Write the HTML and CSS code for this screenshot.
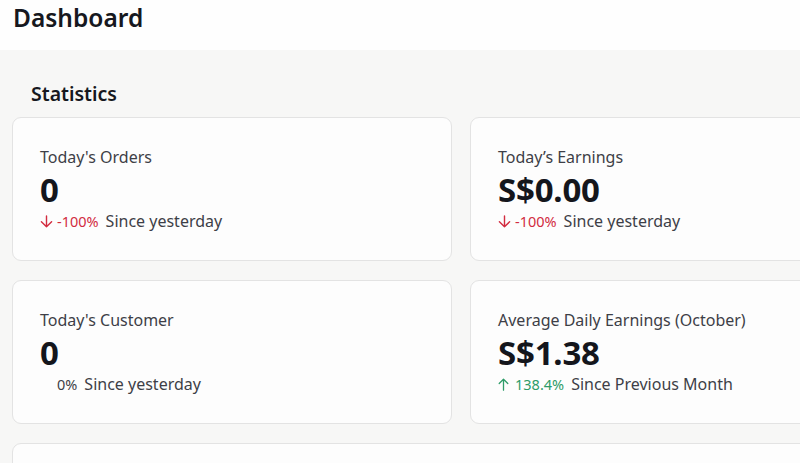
FILE: index.html
```html
<!DOCTYPE html>
<html>
<head>
<meta charset="utf-8">
<link rel="stylesheet" href="styles.css">
</head>
<body>
<header class="topbar">
  <h1 class="page-title">Dashboard</h1>
</header>
<main class="content">
  <h2 class="section-title">Statistics</h2>
  <div class="stats-grid">
    <div class="card">
      <div class="card-label">Today's Orders</div>
      <div class="card-value">0</div>
      <div class="card-change">
        <span class="pct down"><svg class="arrow" viewBox="0 0 13 13" width="13" height="13"><path d="M6.5 1v10.8M1.4 6.8L6.5 11.8l5.1-5" fill="none" stroke="currentColor" stroke-width="1.4" stroke-linecap="round" stroke-linejoin="round"/></svg>-100%</span>
        <span class="since">Since yesterday</span>
      </div>
    </div>
    <div class="card">
      <div class="card-label">Today’s Earnings</div>
      <div class="card-value">S$0.00</div>
      <div class="card-change">
        <span class="pct down"><svg class="arrow" viewBox="0 0 13 13" width="13" height="13"><path d="M6.5 1v10.8M1.4 6.8L6.5 11.8l5.1-5" fill="none" stroke="currentColor" stroke-width="1.4" stroke-linecap="round" stroke-linejoin="round"/></svg>-100%</span>
        <span class="since">Since yesterday</span>
      </div>
    </div>
    <div class="card">
      <div class="card-label">Today's Customer</div>
      <div class="card-value">0</div>
      <div class="card-change">
        <span class="pct neutral"><span class="arrow-space"></span>0%</span>
        <span class="since">Since yesterday</span>
      </div>
    </div>
    <div class="card">
      <div class="card-label">Average Daily Earnings (October)</div>
      <div class="card-value">S$1.38</div>
      <div class="card-change">
        <span class="pct up"><svg class="arrow" viewBox="0 0 13 13" width="13" height="13"><path d="M5.5 12.2V1.2M1.2 5.5L5.5 1.2l4.3 4.3" fill="none" stroke="currentColor" stroke-width="1.3" stroke-linecap="round" stroke-linejoin="round"/></svg>138.4%</span>
        <span class="since">Since Previous Month</span>
      </div>
    </div>
    <div class="card card-wide"></div>
  </div>
</main>
</body>
</html>
```
FILE: styles.css
```css
html, body {
  margin: 0;
  padding: 0;
}
body {
  width: 800px;
  height: 463px;
  overflow: hidden;
  font-family: "Noto Sans", "Open Sans", sans-serif;
  background: #f7f7f6;
  color: #1c1d22;
}
.topbar {
  height: 50px;
  background: #fefefe;
  padding: 0 13px;
  box-sizing: border-box;
}
.page-title {
  margin: 0;
  font-size: 24.5px;
  font-weight: 600;
  line-height: 35px;
  color: #161820;
}
.content {
  padding: 30px 0 0 12px;
}
.section-title {
  margin: 0 0 9px 19px;
  font-size: 19.5px;
  font-weight: 600;
  line-height: 28px;
  color: #161820;
}
.stats-grid {
  display: grid;
  grid-template-columns: 440px 440px;
  column-gap: 18px;
  row-gap: 19px;
}
.card {
  background: #fdfdfd;
  border: 1px solid #e3e3e3;
  border-radius: 9px;
  height: 144px;
  box-sizing: border-box;
  padding: 28px 27px 0;
}
.card-wide {
  grid-column: 1 / span 2;
}
.card-label {
  font-size: 16px;
  line-height: 22px;
  color: #3d3f47;
}
.card-value {
  margin-top: 3px;
  font-size: 33px;
  font-weight: 700;
  line-height: 38px;
  color: #14161c;
  letter-spacing: -0.2px;
}
.card-change {
  display: flex;
  align-items: baseline;
  gap: 7px;
  margin-top: 1px;
  font-size: 16px;
  line-height: 22px;
}
.pct {
  display: inline-flex;
  align-items: baseline;
  gap: 4px;
  font-size: 14.5px;
}
.arrow {
  align-self: center;
}
.pct.down { color: #d22b3f; }
.pct.up { color: #2e9c68; }
.pct.neutral { color: #3d3f47; }
.arrow-space {
  display: inline-block;
  width: 13px;
}
.since {
  color: #3d3f47;
}
```
